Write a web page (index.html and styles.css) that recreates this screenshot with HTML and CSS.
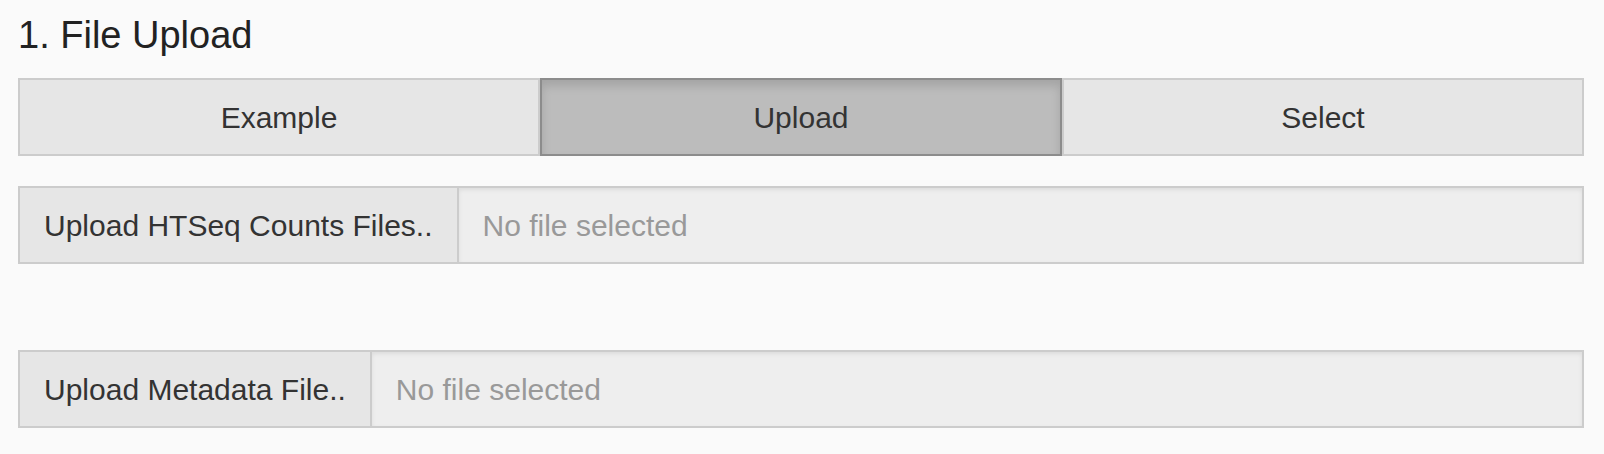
FILE: index.html
```
<!DOCTYPE html>
<html lang="en">
<head>
<meta charset="utf-8">
<title>File Upload</title>
<link rel="stylesheet" href="styles.css">
</head>
<body>
<main class="panel">
  <h1 class="title">1. File Upload</h1>
  <div class="tabs" role="group" aria-label="File source">
    <button type="button" class="tab">Example</button>
    <button type="button" class="tab active" aria-pressed="true">Upload</button>
    <button type="button" class="tab">Select</button>
  </div>
  <div class="file-row">
    <button type="button" class="file-button" id="counts">Upload HTSeq Counts Files..</button>
    <input class="file-name" type="text" placeholder="No file selected" readonly aria-labelledby="counts">
  </div>
  <div class="file-row">
    <button type="button" class="file-button" id="metadata">Upload Metadata File..</button>
    <input class="file-name" type="text" placeholder="No file selected" readonly aria-labelledby="metadata">
  </div>
</main>
</body>
</html>
```
FILE: styles.css
```
* {
  box-sizing: border-box;
}

body {
  margin: 0;
  background: #fafafa;
  color: #222;
  font-family: "Liberation Sans", Arial, sans-serif;
}

.panel {
  padding: 13px 20px 26px 18px;
}

.title {
  margin: 0 0 21px;
  font-size: 38px;
  font-weight: 400;
  line-height: 44px;
}

.tabs {
  display: flex;
  margin-bottom: 30px;
}

.tab,
.file-button {
  padding: 17px 24px 15px;
  border: 2px solid #ccc;
  border-radius: 0;
  background: #e6e6e6;
  color: #333;
  font: 30px/42px "Liberation Sans", Arial, sans-serif;
}

.tab {
  flex: 1;
}

.tab.active {
  border-color: #8c8c8c;
  background: #bcbcbc;
  box-shadow: inset 0 6px 10px rgba(0, 0, 0, 0.125);
}

.file-row {
  display: flex;
  margin-bottom: 86px;
}

.file-row:last-child {
  margin-bottom: 0;
}

.file-button {
  border-right: 0;
}

.file-name {
  flex: 1;
  min-width: 0;
  padding: 17px 24px 15px;
  border: 2px solid #ccc;
  border-radius: 0;
  background: #eee;
  box-shadow: inset 0 2px 4px rgba(0, 0, 0, 0.075);
  color: #333;
  font: 30px/42px "Liberation Sans", Arial, sans-serif;
}

.file-name::placeholder {
  color: #999;
  opacity: 1;
}
```
